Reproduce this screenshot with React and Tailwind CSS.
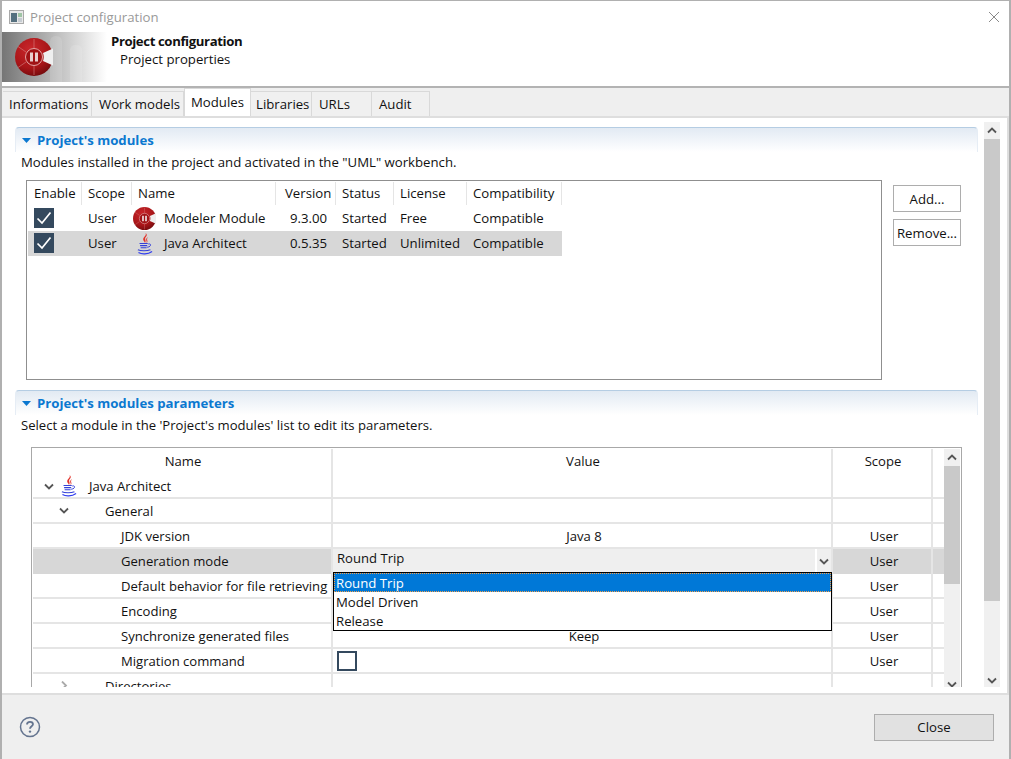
import React from "react";

const FONT = { fontFamily: '"Open Sans", "Noto Sans", sans-serif' };

function Logo({ size = 38, flat = false }) {
  const id = flat ? "lg2" : "lg1";
  return (
    <svg width={size} height={size} viewBox="0 0 38 38" className="shrink-0">
      <defs>
        <radialGradient id={id} cx="40%" cy="30%" r="75%">
          <stop offset="0%" stopColor="#c9272b" />
          <stop offset="65%" stopColor="#a81518" />
          <stop offset="100%" stopColor="#700b0d" />
        </radialGradient>
      </defs>
      <circle cx="19" cy="19" r="19" fill={`url(#${id})`} />
      <path d="M19 1V10M3 8.5L11 14M3 29.5L11 24M19 28V37" stroke="#d98a8a" strokeWidth="0.8" opacity="0.7" />
      <circle cx="19" cy="19" r="8.5" fill="#a01215" stroke="#e5a5a5" strokeWidth="1" />
      <rect x="15" y="14.5" width="3" height="9" fill="#e8cfcf" />
      <rect x="20" y="14.5" width="3" height="9" fill="#e8cfcf" />
      <path d="M28 15L38 10.5Q39.5 19 38 27.5L28 23Q29.5 19 28 15Z" fill="#efefef" />
    </svg>
  );
}

function JavaIcon() {
  return (
    <svg width="20" height="24" viewBox="0 0 18 22" className="shrink-0">
      <path d="M9.5 1C11 3.5 6.5 5 7.5 7.5C8 8.6 9 9.5 9 10C10.5 8 8.5 7 9.3 5.3C10 4 11.8 3 9.5 1Z" fill="#e2342b" />
      <path d="M11.5 4.5C9.5 5.8 10 7.5 10.5 8.5C10.8 9.3 10.2 10 10.2 10C12 9 11 7.8 10.9 7C10.8 6 11.3 5.3 11.5 4.5Z" fill="#e2342b" />
      <path d="M4 10.5H11.5M4.5 12.5H11M5 14.5H10.5" stroke="#3440d8" strokeWidth="1" fill="none" />
      <path d="M12 11C15 10.3 15 13.5 11 14" stroke="#3440d8" strokeWidth="0.9" fill="none" />
      <path d="M2.5 16.3C5 17.5 11 17.5 14 16.3" stroke="#3440d8" strokeWidth="1.1" fill="none" />
      <path d="M3 18.8C6 20.6 11.5 20.6 15.5 17.8" stroke="#2f3cf0" strokeWidth="1.2" fill="none" />
    </svg>
  );
}

function Chevron({ dir = "down", className = "", color = "#555" }) {
  const d = dir === "down" ? "M1 1.5L5 5.5L9 1.5" : dir === "up" ? "M1 5.5L5 1.5L9 5.5" : "M2 0.5L6 4.5L2 8.5";
  return (
    <svg width="10" height={dir === "right" ? 9 : 7} viewBox={dir === "right" ? "0 0 10 9" : "0 0 10 7"} className={className}>
      <path d={d} stroke={color} strokeWidth="1.8" fill="none" />
    </svg>
  );
}

function CheckBox({ checked, className = "" }) {
  return checked ? (
    <span className={`flex h-[20px] w-[20px] items-center justify-center bg-[#34495e] ${className}`}>
      <svg width="16" height="14" viewBox="0 0 16 14">
        <path d="M1.5 7.5L6 12L14.5 1.5" stroke="#fff" strokeWidth="1.7" fill="none" />
      </svg>
    </span>
  ) : (
    <span className={`block h-[20px] w-[20px] border-2 border-[#34495e] bg-white ${className}`} />
  );
}

function SectionHeader({ title }) {
  return (
    <div className="flex h-[25px] w-[963px] shrink-0 items-center gap-[6px] rounded-t-[4px] border-x border-t border-x-[#e6edf5] border-t-[#b5cde3] bg-gradient-to-b from-[#e2eaf3] to-white pl-[6px]">
      <svg width="9" height="5" viewBox="0 0 9 5"><path d="M0 0H9L4.5 5Z" fill="#0b78d0" /></svg>
      <span className="pt-[1px] text-[13.2px] font-bold text-[#0b78d0]">{title}</span>
    </div>
  );
}

const TABS = [
  ["Informations", "w-[89px]", "pl-[6px]"],
  ["Work models", "w-[92px]", "pl-[7px]"],
  ["Modules", "w-[67px]", ""],
  ["Libraries", "w-[61px]", "pl-[5px]"],
  ["URLs", "w-[60px]", "pl-[7px]"],
  ["Audit", "w-[58px]", "pl-[7px]"],
];

function Tabs() {
  return (
    <div className="flex h-[28px] items-end bg-[#efefef] pl-[1px]">
      {TABS.map(([t, w, pl]) =>
        t === "Modules" ? (
          <div key={t} className={`${w} relative z-10 flex h-[28px] items-start justify-center whitespace-nowrap border-x border-t border-[#d9d9d9] bg-white pt-[4px]`}>
            {t}
          </div>
        ) : (
          <div key={t} className={`${w} ${pl} flex h-[25px] items-center whitespace-nowrap border-r border-t border-[#d9d9d9] bg-[#f0f0f0] pt-[1px]`}>
            {t}
          </div>
        )
      )}
    </div>
  );
}

const MOD_COLS = "grid grid-cols-[54px_50px_144px_60px_58px_73px_95px] w-[534px]";

function ModHead({ children, pl = "pl-[6px]" }) {
  return <div className={`${pl} flex h-[23px] items-center border-r border-[#e5e5e5]`}>{children}</div>;
}

function ModRow({ selected, icon, name, version, license }) {
  return (
    <div className={`${MOD_COLS} h-[25px] items-center ${selected ? "bg-[#d7d7d7]" : ""}`}>
      <div className="pl-[6px]"><CheckBox checked className="mb-[2px]" /></div>
      <div className="pl-[6px]">User</div>
      <div className="flex items-center">
        <span className="mr-[7px] flex w-[25px] justify-center">{icon}</span>
        <span>{name}</span>
      </div>
      <div className="pl-[14px]">{version}</div>
      <div className="pl-[6px]">Started</div>
      <div className="pl-[6px]">{license}</div>
      <div className="pl-[6px]">Compatible</div>
    </div>
  );
}

function ModulesTable() {
  return (
    <div className="mt-[8px] flex shrink-0">
      <div className="ml-[11px] h-[200px] w-[856px] border border-[#8f8f8f] p-[1px]">
        <div className={`${MOD_COLS} h-[24px]`}>
          <ModHead>Enable</ModHead>
          <ModHead>Scope</ModHead>
          <ModHead>Name</ModHead>
          <ModHead pl="pl-[9px]">Version</ModHead>
          <ModHead>Status</ModHead>
          <ModHead>License</ModHead>
          <ModHead>Compatibility</ModHead>
        </div>
        <ModRow icon={<Logo size={23} flat />} name="Modeler Module" version="9.3.00" license="Free" />
        <ModRow selected icon={<JavaIcon />} name="Java Architect" version="0.5.35" license="Unlimited" />
      </div>
      <div className="ml-[11px] flex flex-col gap-[7px] pt-[5px]">
        <button className="h-[27px] w-[68px] border border-[#adadad] bg-white pt-[2px]">Add...</button>
        <button className="h-[27px] w-[68px] border border-[#adadad] bg-white pt-[2px]">Remove...</button>
      </div>
    </div>
  );
}

const P_COLS = "grid grid-cols-[300px_500px_100px_11px] w-[911px]";

function PRow({ name, indent, chevron, icon, value, scope = "User", selected, custom }) {
  const nudge = selected ? "" : "pt-[2px]";
  return (
    <div className={`${P_COLS} h-[25px] border-b-2 border-[#e5e5e5]`}>
      <div className={`flex items-center border-r-2 ${selected ? "border-[#e5e5e5] bg-[#d7d7d7]" : "border-[#e5e5e5]"} ${indent}`}>
        {chevron}
        {icon}
        <span className={`whitespace-nowrap ${nudge}`}>{name}</span>
      </div>
      {custom || <div className="flex items-center justify-center border-r-2 border-[#e5e5e5] pl-[4px] pt-[2px]">{value}</div>}
      <div className={`flex items-center justify-center border-r-2 border-[#e5e5e5] pl-[4px] ${nudge} ${selected ? "bg-[#d7d7d7]" : ""}`}>{scope}</div>
      <div className={selected ? "bg-[#d7d7d7]" : ""} />
    </div>
  );
}

function ParamsTable() {
  return (
    <div className="relative ml-[16px] mt-[12px] flex h-[240px] w-[931px] shrink-0 overflow-hidden border-x border-t border-[#a8a8a8] pl-[1px] pt-[1px]">
      <div className="w-[911px] shrink-0 text-[13.1px]">
        <div className={`${P_COLS} h-[25px]`}>
          <div className="flex items-center justify-center border-r-2 border-[#e5e5e5] pl-[2px]">Name</div>
          <div className="flex items-center justify-center border-r-2 border-[#e5e5e5] pl-[2px]">Value</div>
          <div className="flex items-center justify-center border-r-2 border-[#e5e5e5] pl-[2px]">Scope</div>
          <div />
        </div>
        <PRow name="Java Architect" indent="pl-[11px]" scope="" value=""
          chevron={<Chevron className="mr-[5px]" />}
          icon={<span className="mr-[10px] flex w-[20px] justify-center"><JavaIcon /></span>} />
        <PRow name="General" indent="pl-[26px]" scope="" value="" chevron={<Chevron className="mr-[36px]" />} />
        <PRow name="JDK version" indent="pl-[88px]" value="Java 8" />
        <PRow name="Generation mode" indent="pl-[88px]" selected
          custom={
            <div className="flex items-center border-r-2 border-[#e5e5e5] bg-[#efefef] pl-[4px]">
              <span className="flex-1 pb-[5px]">Round Trip</span>
              <span className="flex h-full w-[16px] items-center justify-center border-l-2 border-white"><Chevron /></span>
            </div>
          } />
        <PRow name="Default behavior for file retrieving" indent="pl-[88px]" value="" />
        <PRow name="Encoding" indent="pl-[88px]" value="" />
        <PRow name="Synchronize generated files" indent="pl-[88px]" value="Keep" />
        <PRow name="Migration command" indent="pl-[88px]"
          custom={<div className="flex items-center border-r-2 border-[#e5e5e5] pl-[4px]"><CheckBox /></div>} />
        <PRow name="Directories" indent="pl-[27px]" scope="" value="" chevron={<Chevron dir="right" color="#aaa" className="mr-[35px]" />} />
      </div>
      <div className="flex h-[240px] w-[16px] shrink-0 flex-col bg-[#f0f0f0]">
        <div className="flex h-[17px] items-center justify-center"><Chevron dir="up" /></div>
        <div className="h-[118px] bg-[#c9c9c9]" />
        <div className="flex flex-1 items-end justify-center pb-[1px]"><Chevron /></div>
      </div>
      <div className="absolute left-[301px] top-[124px] z-20 w-[499px] border border-black bg-white leading-[21px]">
        <div className="h-[19px] bg-[#0078d7] pl-[2px] text-white outline-1 -outline-offset-1 outline-dotted outline-[#f5a04a]">Round Trip</div>
        <div className="h-[19px] pl-[2px]">Model Driven</div>
        <div className="h-[19px] pl-[2px]">Release</div>
      </div>
    </div>
  );
}

export default function App() {
  return (
    <div style={FONT} className="flex h-[759px] w-[1011px] flex-col overflow-hidden border-l-2 border-r-2 border-t border-[#b0b0b0] bg-white text-[13.2px] text-[#111]">
      <div className="flex h-[31px] shrink-0 items-center pl-[7px] pr-[9px] text-[#9a9a9a]">
        <svg width="15" height="14" viewBox="0 0 15 14" className="mr-[6px]">
          <rect x="0.5" y="0.5" width="14" height="13" fill="#e8e8e8" stroke="#a9a9a9" />
          <rect x="2" y="3" width="6" height="9" fill="#55707f" />
          <rect x="9" y="3" width="4" height="4" fill="#9fc4a5" />
          <rect x="9" y="8" width="4" height="4" fill="#c6ccd2" />
        </svg>
        <span className="flex-1 pt-[2px]">Project configuration</span>
        <svg width="12" height="12" viewBox="0 0 12 12"><path d="M1 1L11 11M11 1L1 11" stroke="#8a8a8a" strokeWidth="1" /></svg>
      </div>

      <div className="flex h-[56px] shrink-0 border-b-2 border-[#b3b3b3]">
        <div className="relative mb-[5px] flex h-[50px] w-[105px] items-center bg-gradient-to-r from-[#757575] via-[#bbbbbb] to-white pl-[13px]">
          <svg width="105" height="50" viewBox="0 0 105 50" className="absolute left-0 top-0">
            <path d="M48 50V10Q48 4 54 4Q60 4 60 10V50ZM68 50V18Q68 13 74 13Q80 13 80 18V50Z" fill="#fff" opacity="0.13" />
          </svg>
          <span className="relative flex"><Logo size={38} /></span>
        </div>
        <div className="pl-[4px]">
          <div className="font-bold leading-[18px] tracking-[-0.4px]">Project configuration</div>
          <div className="pl-[9px] leading-[18px]">Project properties</div>
        </div>
      </div>

      <Tabs />

      <div className="flex min-h-0 flex-1 flex-col bg-[#efefef]">
        <div className="flex h-[579px] shrink-0 border-y-2 border-r-2 border-[#dedede] bg-white pl-[1px]">
          <div className="flex h-[571px] w-[976px] shrink-0 flex-col overflow-hidden pl-[12px] pt-[9px]">
            <SectionHeader title="Project's modules" />
            <div className="ml-[6px] flex h-[20px] shrink-0 items-center pt-[2px]">Modules installed in the project and activated in the "UML" workbench.</div>
            <ModulesTable />
            <div className="h-[10px] shrink-0" />
            <SectionHeader title="Project's modules parameters" />
            <div className="ml-[6px] flex h-[20px] shrink-0 items-center pt-[2px] text-[13.1px]">Select a module in the 'Project's modules' list to edit its parameters.</div>
            <ParamsTable />
          </div>
          <div className="ml-[5px] mt-[4px] flex h-[565px] w-[16px] flex-col bg-[#f0f0f0]">
            <div className="flex h-[17px] items-center justify-center"><Chevron dir="up" /></div>
            <div className="h-[462px] bg-[#c9c9c9]" />
            <div className="flex flex-1 items-end justify-center pb-[3px]"><Chevron /></div>
          </div>
        </div>
        <div className="flex flex-1 items-center justify-between pl-[17px] pr-[15px]">
          <svg width="22" height="22" viewBox="0 0 22 22">
            <circle cx="11" cy="11" r="9.5" fill="none" stroke="#64748f" strokeWidth="1.5" />
            <path d="M8 8.5C8 6.5 9.4 5.8 11 5.8C12.7 5.8 14 6.8 14 8.3C14 10.3 11 10.3 11 12.8" fill="none" stroke="#64748f" strokeWidth="1.8" />
            <circle cx="11" cy="15.6" r="1.2" fill="#64748f" />
          </svg>
          <button className="h-[27px] w-[120px] border border-[#adadad] bg-[#e1e1e1] pt-[2px]">Close</button>
        </div>
      </div>
    </div>
  );
}
